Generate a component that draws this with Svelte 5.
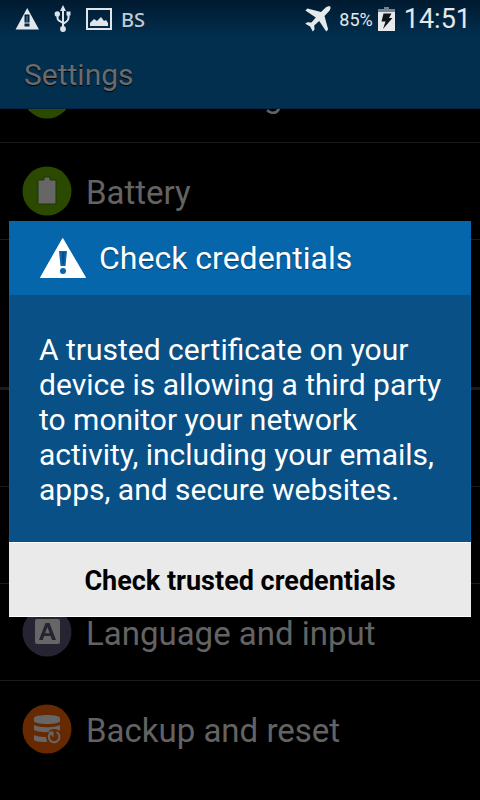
<script>
  const rows = [
    { label: 'Power saving mode', icon: 'power' },
    { label: 'Battery', icon: 'battery' },
    { label: '', icon: '', last: true },
    { group: true },
    { label: '', icon: '' },
    { label: '', icon: '' },
    { label: 'Language and input', icon: 'language' },
    { label: 'Backup and reset', icon: 'backup', last: true }
  ];
</script>

<div class="screen">
  <div class="status">
    <svg class="s-warn" width="25" height="23" viewBox="0 0 25 23" aria-label="Warning">
      <path fill="#e4e8eb" fill-rule="evenodd" d="M12.2 0 24 21.500H.6zM9.500 6.500v8h5v-8zM9.500 15.500v3h5v-3z" />
      <path fill="#e4e8eb" d="M11.200 8h1.600v6h-1.600z" opacity=".3" />
    </svg>
    <svg class="s-usb" width="18" height="28" viewBox="0 0 18 28" aria-label="USB">
      <path d="M9 4v19M3.500 9v4q0 2 2 3l3.500 2M14.500 9v4q0 2-2 3.500L9 19" fill="none" stroke="#dde4e9" stroke-width="2" />
      <path d="M9 0l3 6H6zM12.500 6.500h4v4h-4z" fill="#dde4e9" />
      <circle cx="3.300" cy="9" r="2.700" fill="#dde4e9" />
      <circle cx="9" cy="24" r="2.900" fill="#dde4e9" />
    </svg>
    <svg class="s-pic" width="26" height="22" viewBox="0 0 26 22" aria-label="Picture">
      <rect x="1" y="1" width="24" height="20" fill="none" stroke="#dfe5e9" stroke-width="2" />
      <path d="M4 18v-3l4-4 3 2 4-4 3 4 2-1 2 3v3z" fill="#dfe5e9" />
    </svg>
    <span class="bs">BS</span>
    <svg class="s-plane" width="26" height="26" viewBox="0 0 26 26" aria-label="Airplane mode">
      <path fill="#e4e9ec" d="M25.200.6c.7.900.3 3-1 4.300l-4.700 5L23.200 23.500l-2 2-7-10.500-5 4.500.3 4-1.700 2.100-2.700-5-4.800-2.800 2-1.600 4.200.2 4.300-5L.4 4.500l2-2L16 6l4.700-4.400C22 .3 24.200-.3 25.200.6z" />
    </svg>
    <span class="pct">85%</span>
    <svg class="s-bat" width="17" height="24" viewBox="0 0 17 24" aria-label="Charging">
      <path d="M6 0h5v2h6v3H0V2h6z" fill="#75838e" />
      <path d="M0 5h17v19H0z" fill="#e6eaed" />
      <path d="M5.500 6.500h8l-2.500 4.500h3.500L5 22l2.500-7.500H3.500z" fill="#0d151b" />
    </svg>
    <time class="clock">14:51</time>
  </div>
  <header><h1>Settings</h1></header>

  <main>
    <ul class="list">
      {#each rows as row}
        {#if row.group}
          <li class="group"></li>
        {:else}
          <li class="row" class:last={row.last}>
            {#if row.icon}
              <svg width="50" height="50" viewBox="0 0 50 50" aria-hidden="true">
                {#if row.icon === 'power'}
                  <circle cx="25" cy="25" r="24.500" fill="#2b4a00" />
                {:else if row.icon === 'battery'}
                  <circle cx="25" cy="25" r="24.500" fill="#2b4a00" />
                  <path d="M22 11h6v3h6v24H16V14h6z" fill="#666" stroke="#1f3700" />
                {:else if row.icon === 'language'}
                  <circle cx="25" cy="25" r="24.500" fill="#262433" />
                  <rect x="13" y="12" width="25" height="25" rx="2" fill="#666" />
                  <path fill="#262433" fill-rule="evenodd" d="M23.500 16h4L34 33h-4l-1.300-4h-6.600l-1.300 4H17zM25.400 20l-2.300 6.200h4.600z" />
                {:else}
                  <circle cx="25" cy="25" r="24.500" fill="#662900" />
                  <path d="M12 14c0-4 26-4 26 0v3c0 4-26 4-26 0zM12 21c5 3 21 3 26 0v5c-5 3-21 3-26 0zM12 31c5 2 9 2 13 2v5c-5 0-10 0-13-2z" fill="#666" />
                  <circle cx="32" cy="33" r="8" fill="#662900" />
                  <path d="M34.500 28.200A5.300 5.300 0 1 1 28.300 29.300" fill="none" stroke="#666" stroke-width="2" />
                  <path d="M25.500 27.500h6v6z" fill="#666" />
                {/if}
              </svg>
            {/if}
            <span>{row.label}</span>
          </li>
        {/if}
      {/each}
    </ul>
  </main>

  <div class="overlay">
    <div class="dialog" role="alertdialog" aria-modal="true" aria-labelledby="title" aria-describedby="message">
      <div class="title">
        <svg width="46" height="42" viewBox="0 0 46 42" aria-hidden="true">
          <path d="M22.700 1.500 45.500 40.500H.5z" fill="#fff" stroke="#fff" />
          <path d="M19 14h8l-1.500 15h-5z" fill="#0766ad" />
          <path d="M22 15h2.500l-.5 12h-1.500z" fill="#0a4d82" />
          <circle cx="23" cy="34" r="3" fill="#0766ad" />
        </svg>
        <h2 id="title">Check credentials</h2>
      </div>
      <p id="message">A trusted certificate on your device is allowing a third party to monitor your network activity, including your emails, apps, and secure websites.</p>
      <button type="button">Check trusted credentials</button>
    </div>
  </div>
</div>

<style>
  :global(body) {
    margin: 0;
    background: #000;
  }
  .screen {
    position: relative;
    display: flex;
    flex-direction: column;
    height: 100vh;
    overflow: hidden;
    background: #000;
    font-family: Roboto, sans-serif;
  }
  .status {
    flex: none;
    display: flex;
    align-items: center;
    height: 38px;
    padding: 0 9px 0 15px;
    background: linear-gradient(#001a30, #022f4e);
    color: #e4e8eb;
  }
  .s-usb {
    margin-left: 14px;
  }
  .s-pic {
    margin-left: 14px;
  }
  .bs {
    margin-left: 9px;
    font: 500 20px "Noto Sans", sans-serif;
    color: #c3cbd1;
  }
  .s-plane {
    margin-left: auto;
  }
  .pct {
    margin: 0 5px 0 8px;
    font-size: 18px;
  }
  .clock {
    margin-left: 9px;
    font-size: 27px;
  }
  header {
    flex: none;
    display: flex;
    align-items: center;
    height: 68px;
    padding: 2px 24px 0;
    background: #022f4e;
    border-bottom: 1px solid #022445;
  }
  h1 {
    margin: 0;
    font-size: 30px;
    font-weight: 400;
    color: #6b6b6b;
    text-shadow: 0 1px 1px #000;
  }
  main {
    flex: 1;
    min-height: 0;
    overflow: hidden;
  }
  .list {
    margin: -63px 0 0;
    padding: 0;
    list-style: none;
  }
  .row {
    display: flex;
    align-items: center;
    gap: 14px;
    height: 96px;
    padding: 0 22px;
    border-bottom: 1px solid #1b1b1b;
    font-size: 33px;
    color: #636363;
  }
  .row span {
    padding-top: 2px;
  }
  .row.last {
    border-bottom-color: transparent;
  }
  .row svg {
    flex: none;
  }
  .group {
    height: 50px;
    border-bottom: 3px solid #171c20;
  }
  .overlay {
    position: absolute;
    inset: 38px 0 0;
    display: flex;
    align-items: center;
    padding: 0 9px;
  }
  .dialog {
    flex: 1;
    background: #085085;
  }
  .title {
    display: flex;
    align-items: center;
    gap: 13px;
    height: 74px;
    padding: 0 31px;
    background: #0566ab;
  }
  h2 {
    margin: 0;
    font-size: 32px;
    font-weight: 400;
    color: #fff;
    text-shadow: 0 1px 1px #033c68;
  }
  p {
    margin: 0;
    padding: 37px 24px 35px 29px;
    border: solid #055c9a;
    border-width: 0 1px;
    font-size: 30px;
    line-height: 35px;
    color: #fff;
  }
  button {
    display: block;
    width: 100%;
    height: 75px;
    padding: 2px 0 0;
    border: solid #fff;
    border-width: 1px 0;
    background: #eaeaea;
    font: 700 27px Roboto, sans-serif;
    color: #000;
  }
</style>
